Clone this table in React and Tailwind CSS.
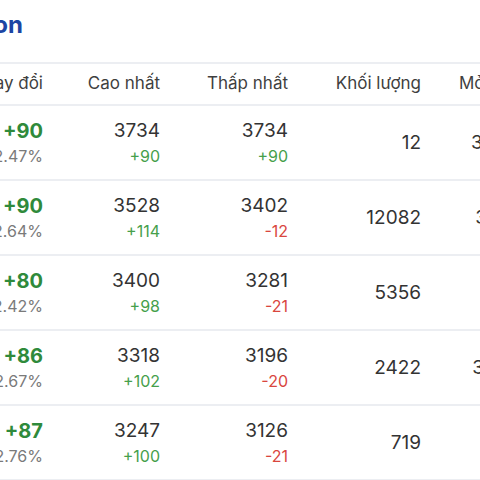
import React from 'react';

const rows = [
  { change: '+90', pct: '2.47%', high: '3734', highD: '+90', low: '3734', lowD: '+90', vol: '12', open: '3644' },
  { change: '+90', pct: '2.64%', high: '3528', highD: '+114', low: '3402', lowD: '-12', vol: '12082', open: '3414' },
  { change: '+80', pct: '2.42%', high: '3400', highD: '+98', low: '3281', lowD: '-21', vol: '5356', open: '812' },
  { change: '+86', pct: '2.67%', high: '3318', highD: '+102', low: '3196', lowD: '-20', vol: '2422', open: '3236' },
  { change: '+87', pct: '2.76%', high: '3247', highD: '+100', low: '3126', lowD: '-21', vol: '719', open: '97' },
];

const deltaColor = (v) => (v.startsWith('-') ? 'text-[#d9463e]' : 'text-[#46a04b]');

const App = () => {
  return (
    <div className="w-[480px] h-[480px] overflow-hidden bg-white font-['Inter','Liberation_Sans',sans-serif] text-[#333]">
      <div className="h-[62px] pt-[9px]">
        <div className="flex justify-end w-[23px] whitespace-nowrap">
          <h1 className="text-[24px] leading-[32px] font-bold text-[#1c45a3]">Giá cà phê Robusta London</h1>
        </div>
      </div>

      <div className="-ml-[77px] w-[640px]">
        <div className="flex h-[44px] items-center border-y-2 border-[#eceef2] text-[17px] text-[#3f3f3f] whitespace-nowrap">
          <div className="w-[120px] text-right">Thay đổi</div>
          <div className="w-[117px] text-right">Cao nhất</div>
          <div className="w-[128px] text-right">Thấp nhất</div>
          <div className="w-[133px] text-right">Khối lượng</div>
          <div className="w-[98px] text-right">Mở cửa</div>
        </div>

        {rows.map((r, i) => (
          <div key={i} className="flex h-[75px] items-center border-b-2 border-[#eceef2] whitespace-nowrap">
            <div className="w-[120px] flex flex-col items-end">
              <span className="text-[20px] leading-[24px] font-bold text-[#2f8a3b]">{r.change}</span>
              <span className="text-[16px] leading-[22px] mt-[2px] text-[#7a7a7a]">{r.pct}</span>
            </div>
            <div className="w-[117px] flex flex-col items-end">
              <span className="text-[19px] leading-[24px]">{r.high}</span>
              <span className={`text-[16px] leading-[22px] mt-[2px] ${deltaColor(r.highD)}`}>{r.highD}</span>
            </div>
            <div className="w-[128px] flex flex-col items-end">
              <span className="text-[19px] leading-[24px]">{r.low}</span>
              <span className={`text-[16px] leading-[22px] mt-[2px] ${deltaColor(r.lowD)}`}>{r.lowD}</span>
            </div>
            <div className="w-[133px] text-right text-[19px] leading-[24px]">{r.vol}</div>
            <div className="w-[98px] text-right text-[19px] leading-[24px]">{r.open}</div>
          </div>
        ))}
      </div>
    </div>
  );
};

export default App;
